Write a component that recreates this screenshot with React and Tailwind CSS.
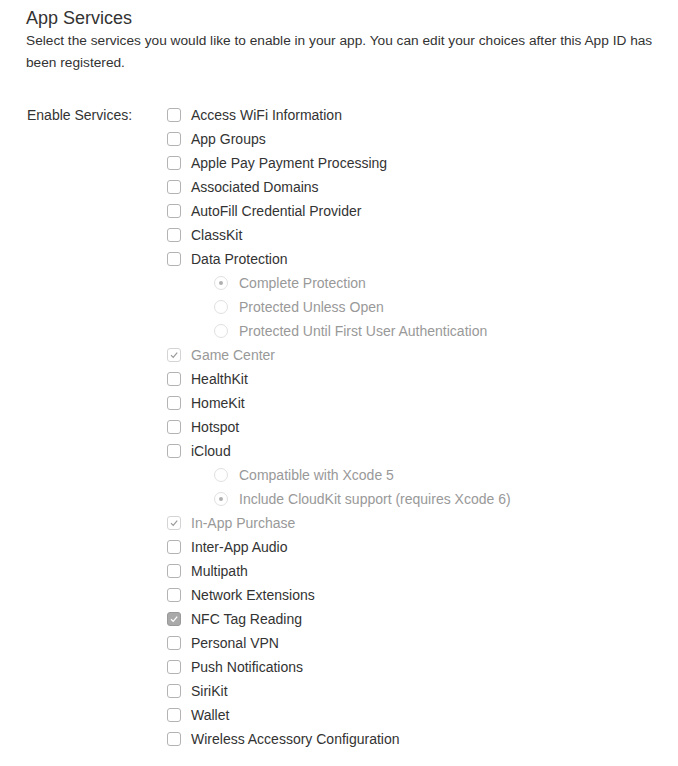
const services = [
    { label: "Access WiFi Information" },
    { label: "App Groups" },
    { label: "Apple Pay Payment Processing" },
    { label: "Associated Domains" },
    { label: "AutoFill Credential Provider" },
    { label: "ClassKit" },
    { label: "Data Protection" },
    { label: "Complete Protection", radio: true, selected: true },
    { label: "Protected Unless Open", radio: true },
    { label: "Protected Until First User Authentication", radio: true },
    { label: "Game Center", disabled: true, checked: true },
    { label: "HealthKit" },
    { label: "HomeKit" },
    { label: "Hotspot" },
    { label: "iCloud" },
    { label: "Compatible with Xcode 5", radio: true },
    { label: "Include CloudKit support (requires Xcode 6)", radio: true, selected: true },
    { label: "In-App Purchase", disabled: true, checked: true },
    { label: "Inter-App Audio" },
    { label: "Multipath" },
    { label: "Network Extensions" },
    { label: "NFC Tag Reading", checked: true },
    { label: "Personal VPN" },
    { label: "Push Notifications" },
    { label: "SiriKit" },
    { label: "Wallet" },
    { label: "Wireless Accessory Configuration" },
];

function Check({ checked, disabled }) {
    if (checked && !disabled) {
        return (
            <span className="w-[14px] h-[14px] rounded-[3px] bg-[#a9a9a9] border border-[#999] flex items-center justify-center">
                <svg width="10" height="10" viewBox="0 0 10 10">
                    <path d="M2 5.2 L4.2 7.4 L8.2 2.6" fill="none" stroke="#fff" strokeWidth="1.3" />
                </svg>
            </span>
        );
    }
    return (
        <span
            className={`w-[14px] h-[14px] rounded-[3px] border flex items-center justify-center bg-white ${
                disabled ? "border-[#d4d4d4]" : "border-[#b3b3b3]"
            }`}
        >
            {checked && (
                <svg width="10" height="10" viewBox="0 0 10 10">
                    <path d="M2 5.2 L4.2 7.4 L8.2 2.6" fill="none" stroke="#999" strokeWidth="1.2" />
                </svg>
            )}
        </span>
    );
}

function Radio({ selected }) {
    return (
        <span className="w-[14px] h-[14px] rounded-full border border-[#e0e0e0] flex items-center justify-center bg-white">
            {selected && <span className="w-[4px] h-[4px] rounded-full bg-[#b0b0b0]" />}
        </span>
    );
}

export default function App() {
    return (
        <div
            className="bg-white min-h-[766px] text-[#333] pl-[26px] pt-[7px]"
            style={{ fontFamily: '"Liberation Sans", Arial, sans-serif' }}
        >
            <h1 className="text-[18px] leading-[22px] text-[#333]">App Services</h1>
            <p className="text-[13.7px] leading-[22px] text-[#333] mt-[1px] pr-[20px]">
                Select the services you would like to enable in your app. You can edit your choices after this App ID has
                been registered.
            </p>

            <div className="flex mt-[29px]">
                <div className="w-[141px] pl-[1px] text-[14px] leading-[24px]">Enable Services:</div>
                <div className="flex flex-col">
                    {services.map((s) =>
                        s.radio ? (
                            <div key={s.label} className="flex items-center h-[24px] pl-[47px] gap-[11px] text-[14px] text-[#999]">
                                <Radio selected={s.selected} />
                                <span>{s.label}</span>
                            </div>
                        ) : (
                            <div
                                key={s.label}
                                className={`flex items-center h-[24px] gap-[10px] text-[14px] ${
                                    s.disabled ? "text-[#999]" : "text-[#333]"
                                }`}
                            >
                                <Check checked={s.checked} disabled={s.disabled} />
                                <span>{s.label}</span>
                            </div>
                        )
                    )}
                </div>
            </div>
        </div>
    );
}
